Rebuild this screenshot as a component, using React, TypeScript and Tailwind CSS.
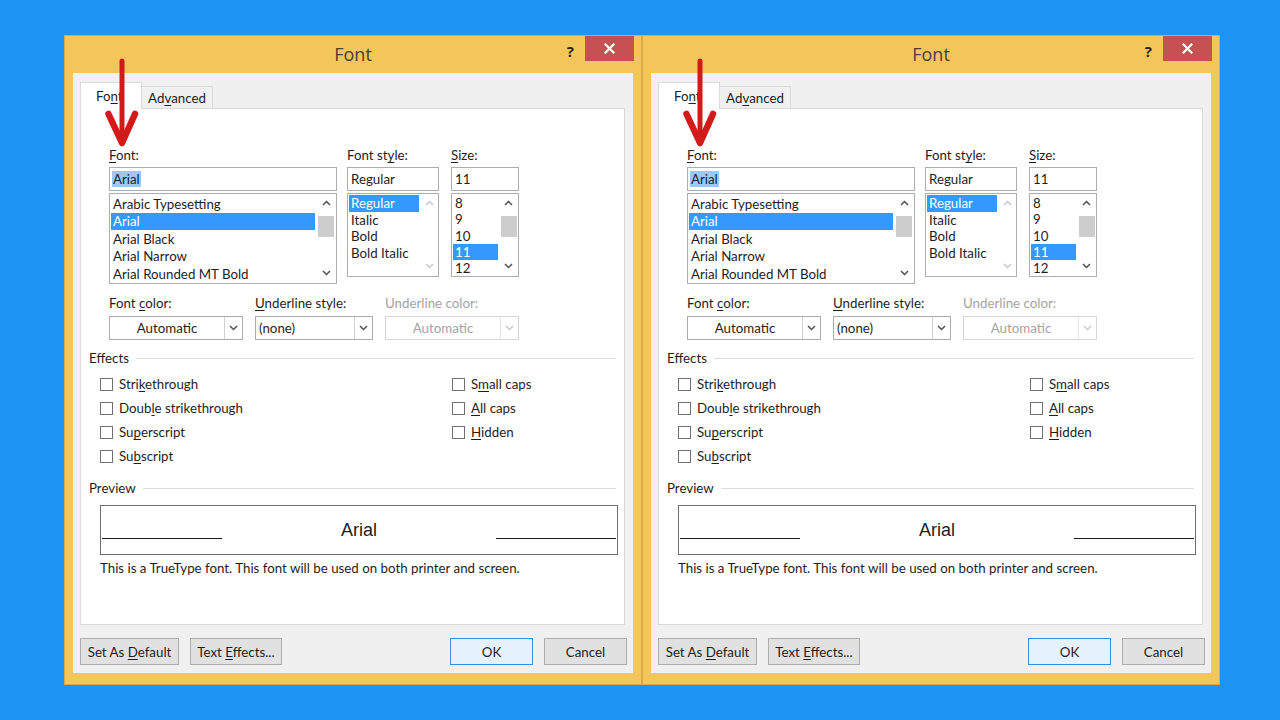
import React from "react";

function Acc({ a, u, b }: { a?: string; u: string; b?: string }) {
  return (
    <span className="whitespace-pre">
      {a}
      <span className="underline underline-offset-[2px] decoration-[1px]">{u}</span>
      {b}
    </span>
  );
}

function Chevron({ up, disabled }: { up?: boolean; disabled?: boolean }) {
  return (
    <svg width="9" height="6" viewBox="0 0 9 6">
      <polyline
        points={up ? "1,5 4.5,1.5 8,5" : "1,1 4.5,4.5 8,1"}
        fill="none"
        stroke={disabled ? "#c8c8c8" : "#505050"}
        strokeWidth="1.5"
      />
    </svg>
  );
}

function ScrollBar({ thumb, disabled, w }: { thumb?: boolean; disabled?: boolean; w: string }) {
  return (
    <div className={`${w} flex flex-col items-center bg-white`}>
      <div className="h-[18px] w-full flex items-center justify-center">
        <Chevron up disabled={disabled} />
      </div>
      {thumb ? <div className="mt-[4px] h-[21px] w-[16px] bg-[#cdcdcd]" /> : null}
      <div className="flex-1" />
      <div className="h-[20px] w-full flex items-center justify-center">
        <Chevron disabled={disabled} />
      </div>
    </div>
  );
}

function ListBox({
  items,
  selected,
  w,
  h,
  rowH,
  sbW,
  thumb,
  disabled,
}: {
  items: string[];
  selected: number;
  w: string;
  h: string;
  rowH: string;
  sbW: string;
  thumb?: boolean;
  disabled?: boolean;
}) {
  return (
    <div className={`${w} ${h} mt-[2px] border border-[#abadb3] bg-white flex overflow-hidden`}>
      <div className="flex-1 flex flex-col p-[1px] overflow-hidden">
        {items.map((it, i) => (
          <div
            key={it}
            className={`${rowH} shrink-0 pl-[2px] flex items-center whitespace-nowrap ${
              i === selected ? "bg-[#3399ff] text-white" : "text-[#1e1e1e]"
            }`}
          >
            {it}
          </div>
        ))}
      </div>
      <ScrollBar w={sbW} thumb={thumb} disabled={disabled} />
    </div>
  );
}

function Combo({
  w,
  text,
  center,
  disabled,
}: {
  w: string;
  text: string;
  center?: boolean;
  disabled?: boolean;
}) {
  return (
    <div
      className={`${w} h-[24px] mt-[5px] border flex bg-white ${
        disabled ? "border-[#d5d5d5]" : "border-[#acacac]"
      }`}
    >
      <div
        className={`flex-1 flex items-center ${center ? "justify-center" : "pl-[3px]"} ${
          disabled ? "text-[#a3a3a3]" : "text-[#1e1e1e]"
        }`}
      >
        {text}
      </div>
      <div
        className={`w-[18px] flex items-center justify-center border-l ${
          disabled ? "border-[#e3e3e3]" : "border-[#d0d0d0]"
        }`}
      >
        <Chevron disabled={disabled} />
      </div>
    </div>
  );
}

function Check({ children }: { children: React.ReactNode }) {
  return (
    <div className="h-[24px] flex items-center">
      <div className="w-[13px] h-[13px] border border-[#707070] bg-white" />
      <span className="ml-[6px] text-[#1e1e1e]">{children}</span>
    </div>
  );
}

function Btn({ w, children, primary }: { w: string; children: React.ReactNode; primary?: boolean }) {
  return (
    <div
      className={`${w} h-[27px] flex items-center justify-center border text-[#1e1e1e] ${
        primary ? "border-[#3c8ddb] bg-[#e5f1fb]" : "border-[#adadad] bg-[#e1e1e1]"
      }`}
    >
      <span className="whitespace-pre">{children}</span>
    </div>
  );
}

function Arrow() {
  return (
    <svg
      className="absolute z-20 left-[36px] top-[20px] pointer-events-none"
      width="42"
      height="95"
      viewBox="0 0 42 95"
    >
      <line x1="21" y1="5" x2="21" y2="86" stroke="#d21a1a" strokeWidth="5" strokeLinecap="round" />
      <polyline
        points="7.5,58 21,87 34,58"
        fill="none"
        stroke="#d21a1a"
        strokeWidth="6.5"
        strokeLinecap="round"
        strokeLinejoin="round"
      />
    </svg>
  );
}

function Dialog() {
  return (
    <div className="relative w-[578px] h-[650px] border border-[#d9a944] bg-[#f3c65c] flex flex-col">
      {/* Title bar */}
      <div className="h-[37px] flex shrink-0">
        <div className="flex-1" />
        <div className="flex items-center text-[18px] text-[#4a4030] font-['Open_Sans','Lato',sans-serif]">
          Font
        </div>
        <div className="flex-1 flex justify-end items-start">
          <div className="mt-[4px] mr-[11px] text-[15px] font-bold text-[#2b2418] font-['Open_Sans',sans-serif]">
            ?
          </div>
          <div className="mr-[7px] w-[49px] h-[25px] bg-[#c75050] flex items-center justify-center">
            <svg width="11" height="11" viewBox="0 0 11 11">
              <path d="M1.5 1.5 L9.5 9.5 M9.5 1.5 L1.5 9.5" stroke="white" strokeWidth="2.2" strokeLinecap="square" />
            </svg>
          </div>
        </div>
      </div>

      {/* Client area */}
      <div className="mx-[8px] h-[600px] bg-[#f0f0f0] pt-[9px] px-[7px] flex flex-col text-[13.3px] leading-[16px] font-['Lato','Open_Sans',sans-serif]">
        {/* Tabs */}
        <div className="flex items-end h-[26px] relative z-10">
          <div className="w-[62px] h-[27px] mb-[-1px] bg-white border border-b-0 border-[#d9d9d9] flex items-center pl-[15px] text-[#1e1e1e]">
            <Acc a="Fo" u="n" b="t" />
          </div>
          <div className="w-[71px] h-[22px] bg-[#f0f0f0] border border-l-0 border-b-0 border-[#d9d9d9] flex items-center justify-center text-[#1e1e1e]">
            <Acc a="Ad" u="v" b="anced" />
          </div>
        </div>

        {/* Panel */}
        <div className="w-[545px] h-[517px] bg-white border border-[#d9d9d9] pt-[38px] flex flex-col">
          {/* Font selectors */}
          <div className="flex pl-[28px]">
            <div className="w-[228px] flex flex-col">
              <div className="h-[16px] text-[#1e1e1e]">
                <Acc u="F" b="ont:" />
              </div>
              <div className="mt-[4px] h-[24px] border border-[#abadb3] flex items-center pl-[2px]">
                <span className="bg-[#99c9f5] text-[#12233a] px-[1px]">Arial</span>
              </div>
              <ListBox
                items={["Arabic Typesetting", "Arial", "Arial Black", "Arial Narrow", "Arial Rounded MT Bold"]}
                selected={1}
                w="w-[228px]"
                h="h-[91px]"
                rowH="h-[17.5px]"
                sbW="w-[20px]"
                thumb
              />
            </div>
            <div className="ml-[10px] w-[92px] flex flex-col">
              <div className="h-[16px] text-[#1e1e1e]">
                <Acc a="Font st" u="y" b="le:" />
              </div>
              <div className="mt-[4px] h-[24px] border border-[#abadb3] flex items-center pl-[3px] text-[#1e1e1e]">
                Regular
              </div>
              <ListBox
                items={["Regular", "Italic", "Bold", "Bold Italic"]}
                selected={0}
                w="w-[92px]"
                h="h-[84px]"
                rowH="h-[16.5px]"
                sbW="w-[18px]"
                disabled
              />
            </div>
            <div className="ml-[12px] w-[68px] flex flex-col">
              <div className="h-[16px] text-[#1e1e1e]">
                <Acc u="S" b="ize:" />
              </div>
              <div className="mt-[4px] h-[24px] border border-[#abadb3] flex items-center pl-[3px] text-[#1e1e1e]">
                11
              </div>
              <ListBox
                items={["8", "9", "10", "11", "12"]}
                selected={3}
                w="w-[68px]"
                h="h-[84px]"
                rowH="h-[16.3px]"
                sbW="w-[19px]"
                thumb
              />
            </div>
          </div>

          {/* Color / underline row */}
          <div className="flex pl-[28px] mt-[11px]">
            <div className="flex flex-col w-[134px]">
              <div className="h-[16px] text-[#1e1e1e]">
                <Acc a="Font " u="c" b="olor:" />
              </div>
              <Combo w="w-[134px]" text="Automatic" center />
            </div>
            <div className="flex flex-col w-[118px] ml-[12px]">
              <div className="h-[16px] text-[#1e1e1e]">
                <Acc u="U" b="nderline style:" />
              </div>
              <Combo w="w-[118px]" text="(none)" />
            </div>
            <div className="flex flex-col w-[134px] ml-[12px]">
              <div className="h-[16px] text-[#a3a3a3]">Underline color:</div>
              <Combo w="w-[134px]" text="Automatic" center disabled />
            </div>
          </div>

          {/* Effects */}
          <div className="mt-[10px] pl-[8px] pr-[8px] h-[16px] flex items-center">
            <span className="text-[#1e1e1e]">Effects</span>
            <div className="ml-[7px] flex-1 h-px bg-[#dcdcdc]" />
          </div>
          <div className="mt-[6px] pl-[19px] flex">
            <div className="w-[352px] flex flex-col">
              <Check>
                <Acc a="Stri" u="k" b="ethrough" />
              </Check>
              <Check>
                <Acc a="Doub" u="l" b="e strikethrough" />
              </Check>
              <Check>
                <Acc a="Su" u="p" b="erscript" />
              </Check>
              <Check>
                <Acc a="Su" u="b" b="script" />
              </Check>
            </div>
            <div className="flex flex-col">
              <Check>
                <Acc a="S" u="m" b="all caps" />
              </Check>
              <Check>
                <Acc u="A" b="ll caps" />
              </Check>
              <Check>
                <Acc u="H" b="idden" />
              </Check>
            </div>
          </div>

          {/* Preview */}
          <div className="mt-[12px] pl-[8px] pr-[8px] h-[16px] flex items-center">
            <span className="text-[#1e1e1e]">Preview</span>
            <div className="ml-[7px] flex-1 h-px bg-[#dcdcdc]" />
          </div>
          <div className="mt-[9px] ml-[19px] w-[518px] h-[50px] border border-[#6e6e6e] flex items-end pb-[15px] px-[1px]">
            <div className="w-[120px] h-[1.5px] bg-[#1a1a1a]" />
            <div className="flex-1 flex justify-center">
              <span className="text-[18px] leading-[20px] mb-[-1px] font-['Liberation_Sans',Arial,sans-serif] text-[#222]">
                Arial
              </span>
            </div>
            <div className="w-[120px] h-[1.5px] bg-[#1a1a1a]" />
          </div>
          <div className="mt-[5px] ml-[19px] h-[16px] text-[#1e1e1e]">
            This is a TrueType font. This font will be used on both printer and screen.
          </div>
        </div>

        {/* Buttons */}
        <div className="mt-[13px] w-[547px] flex">
          <Btn w="w-[99px]">
            <Acc a="Set As " u="D" b="efault" />
          </Btn>
          <div className="ml-[11px]">
            <Btn w="w-[92px]">
              <Acc a="Text " u="E" b="ffects..." />
            </Btn>
          </div>
          <div className="flex-1" />
          <Btn w="w-[83px]" primary>
            OK
          </Btn>
          <div className="ml-[11px]">
            <Btn w="w-[83px]">Cancel</Btn>
          </div>
        </div>
      </div>

      <Arrow />
    </div>
  );
}

export default function App() {
  return (
    <div className="w-[1280px] h-[720px] bg-[#1e95f4] pt-[35px] pl-[64px] flex overflow-hidden">
      <Dialog />
      <Dialog />
    </div>
  );
}
